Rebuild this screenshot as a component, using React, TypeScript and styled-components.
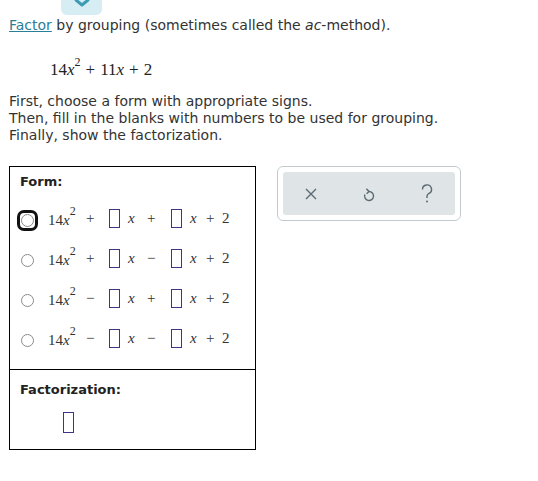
import styled, { createGlobalStyle } from "styled-components";

const GlobalStyle = createGlobalStyle`
  body {
    margin: 0;
    background: #fff;
    font-family: "DejaVu Sans", Verdana, sans-serif;
    font-size: 14px;
    color: #333;
  }
`;

const Page = styled.div`
  padding: 0 0 0 9px;
`;

const TopTab = styled.div`
  margin-left: 52px;
  width: 41px;
  height: 15px;
  background: #d5edf3;
  border-radius: 0 0 6px 6px;
  display: flex;
  justify-content: center;
  align-items: flex-start;
`;

const Intro = styled.p`
  margin: 2px 0 0;
  line-height: 17px;
  a {
    color: #2a7e96;
    text-decoration: underline;
  }
`;

const MathLine = styled.div`
  font-family: "Liberation Serif", "Times New Roman", serif;
  font-size: 17px;
  color: #222;
  padding: 23px 0 0 41px;
  height: 30px;
  sup {
    font-size: 12px;
    position: relative;
    top: -2px;
  }
`;

const Op = styled.span`
  margin: 0 5px;
`;

const Steps = styled.p`
  margin: 6px 0 0;
  line-height: 17px;
`;

const Workspace = styled.div`
  display: flex;
  align-items: flex-start;
  gap: 21px;
  margin-top: 22px;
`;

const FormBox = styled.div`
  width: 247px;
  border: 1px solid #000;
  box-sizing: border-box;
`;

const Section = styled.div<{ $h: number; $top: number }>`
  height: ${(p) => p.$h}px;
  padding: ${(p) => p.$top}px 0 0 10px;
  box-sizing: border-box;
  & + & {
    border-top: 1px solid #000;
  }
`;

const Label = styled.div`
  font-weight: bold;
  font-size: 13px;
  color: #222;
  line-height: 16px;
`;

const Rows = styled.div`
  margin-top: 8px;
  display: flex;
  flex-direction: column;
`;

const Row = styled.div`
  height: 40px;
  display: flex;
  align-items: center;
`;

const Radio = styled.span<{ $focus?: boolean }>`
  position: relative;
  width: 13px;
  height: 13px;
  border-radius: 50%;
  border: 1px solid #8a8a8a;
  box-sizing: border-box;
  margin: 5px 14px 0 1px;
  flex: none;
  &::after {
    content: "";
    display: ${(p) => (p.$focus ? "block" : "none")};
    position: absolute;
    inset: -5px;
    border: 3px solid #111;
    border-radius: 7px;
  }
`;

const Expr = styled.div`
  display: flex;
  align-items: center;
  font-family: "Liberation Serif", "Times New Roman", serif;
  font-size: 15px;
  color: #333;
  sup {
    font-size: 12px;
    position: relative;
    top: -4px;
  }
`;

const Term = styled.span<{ $w: number }>`
  display: inline-block;
  white-space: pre;
  width: ${(p) => p.$w}px;
`;

const Blank = styled.span<{ $h?: number }>`
  display: inline-block;
  width: 11px;
  height: ${(p) => p.$h ?? 19}px;
  border: 1px solid #3d3582;
  box-sizing: border-box;
  margin-right: 8px;
`;

const Toolbar = styled.div`
  width: 184px;
  height: 55px;
  border: 1px solid #c3cbd0;
  border-radius: 6px;
  padding: 5px;
  box-sizing: border-box;
  background: #fff;
`;

const ToolInner = styled.div`
  height: 100%;
  background: #dfe4e7;
  border-radius: 3px;
  display: flex;
  align-items: center;
  justify-content: space-between;
  padding: 0 16px;
`;

const ToolButton = styled.span`
  display: flex;
  width: 24px;
  justify-content: center;
  color: #5b6a73;
`;

const FactorRow = styled.div`
  padding: 14px 0 0 43px;
`;

const forms: [string, string][] = [
  ["+", "+"],
  ["+", "-"],
  ["-", "+"],
  ["-", "-"],
];

function FormRow({ s1, s2, focus }: { s1: string; s2: string; focus?: boolean }) {
  return (
    <Row>
      <Radio $focus={focus} />
      <Expr>
        <Term $w={38}>
          14<i>x</i>
          <sup>2</sup>
        </Term>
        <Term $w={23}>{s1 === "-" ? "−" : "+"}</Term>
        <Blank />
        <Term $w={19}>
          <i>x</i>
        </Term>
        <Term $w={24}>{s2 === "-" ? "−" : "+"}</Term>
        <Blank />
        <Term $w={16}>
          <i>x</i>
        </Term>
        <Term $w={30}>{"+  2"}</Term>
      </Expr>
    </Row>
  );
}

export default function App() {
  return (
    <Page>
      <GlobalStyle />
      <TopTab>
        <svg width="16" height="7" viewBox="0 0 16 7">
          <path d="M2 0 L8 5 L14 0" fill="none" stroke="#3e9bb4" strokeWidth="3" strokeLinecap="round" strokeLinejoin="round" />
        </svg>
      </TopTab>
      <Intro>
        <a>Factor</a> by grouping (sometimes called the <i>ac</i>-method).
      </Intro>
      <MathLine>
        14<i>x</i>
        <sup>2</sup>
        <Op>+</Op>11<i>x</i>
        <Op>+</Op>2
      </MathLine>
      <Steps>
        First, choose a form with appropriate signs.
        <br />
        Then, fill in the blanks with numbers to be used for grouping.
        <br />
        Finally, show the factorization.
      </Steps>
      <Workspace>
        <FormBox>
          <Section $h={202} $top={7}>
            <Label>Form:</Label>
            <Rows>
              {forms.map(([a, b], i) => (
                <FormRow key={i} s1={a} s2={b} focus={i === 0} />
              ))}
            </Rows>
          </Section>
          <Section $h={80} $top={12}>
            <Label>Factorization:</Label>
            <FactorRow>
              <Blank $h={21} />
            </FactorRow>
          </Section>
        </FormBox>
        <Toolbar>
          <ToolInner>
            <ToolButton>
              <svg width="14" height="14" viewBox="0 0 14 14">
                <path d="M2 2 L12 12 M12 2 L2 12" stroke="currentColor" strokeWidth="1.4" />
              </svg>
            </ToolButton>
            <ToolButton>
              <svg width="14" height="16" viewBox="0 0 14 16">
                <path d="M7 5.5 A4.5 4.5 0 1 1 2.8 8.5" fill="none" stroke="currentColor" strokeWidth="1.4" />
                <path d="M4.4 2.8 L7 5.5 L4.6 7.8" fill="none" stroke="currentColor" strokeWidth="1.4" />
              </svg>
            </ToolButton>
            <ToolButton>
              <svg width="14" height="20" viewBox="0 0 14 20">
                <path d="M2.5 5.5 A4.5 4.5 0 1 1 8.6 9.6 C7.4 10.2 7 11 7 12.5 V14" fill="none" stroke="currentColor" strokeWidth="1.4" />
                <circle cx="7" cy="17.5" r="1" fill="currentColor" />
              </svg>
            </ToolButton>
          </ToolInner>
        </Toolbar>
      </Workspace>
    </Page>
  );
}
